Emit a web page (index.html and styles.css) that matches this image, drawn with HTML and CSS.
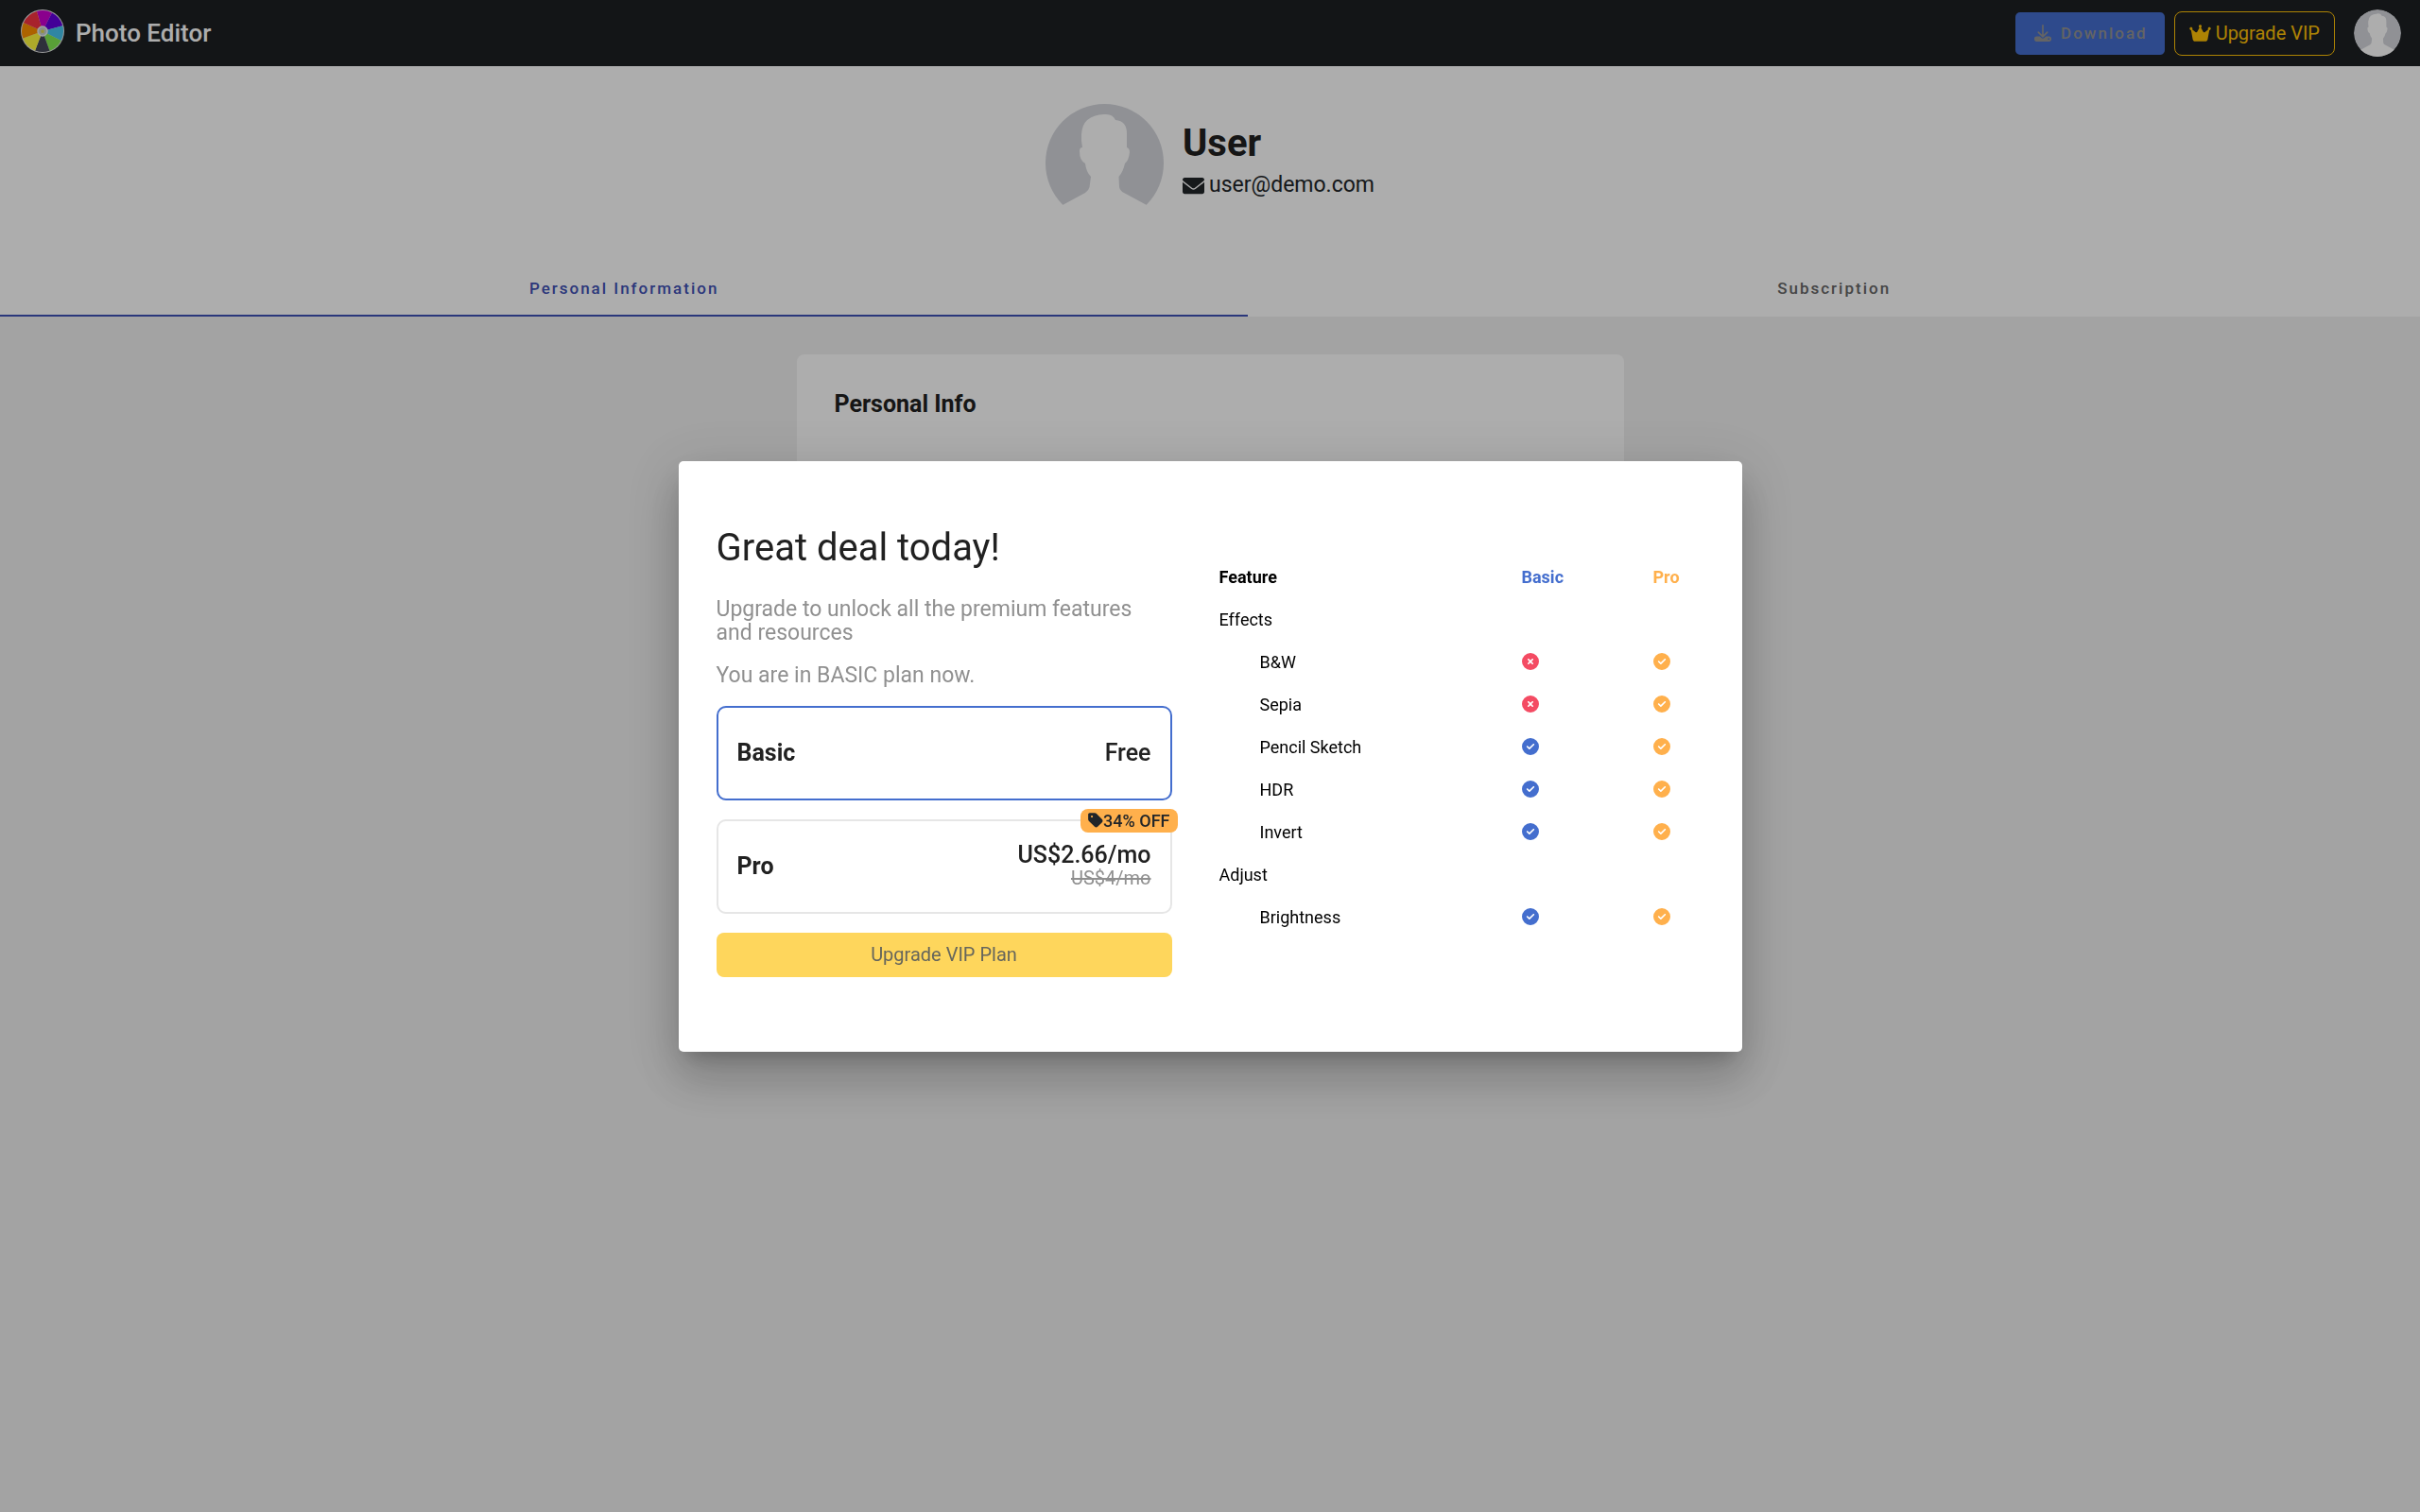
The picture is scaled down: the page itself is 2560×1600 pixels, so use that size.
FILE: index.html
```html
<!DOCTYPE html>
<html lang="en">
<head>
<meta charset="utf-8">
<meta name="viewport" content="width=device-width, initial-scale=1">
<title>Photo Editor</title>
<link rel="stylesheet" href="styles.css">
</head>
<body>
<svg class="sprite" aria-hidden="true">
  <symbol id="avatar" viewBox="0 0 125 125">
    <circle cx="62.500" cy="62.500" r="62.500" fill="#d4d6dc"/>
    <path fill="#fff" d="M0 125V117L18 107L42 94Q46 91 46.500 88L48 77Q43 72 42 63Q36 60 36 50Q36 46 39 46L38 39V32Q39 12 62 11Q71 10 74 17Q86 18 86 31V46Q89 47 89 51Q88 60 84 63Q82 72 77.500 77L78 88Q79 92 83 94L107 107L125 117V125Z"/>
  </symbol>
  <symbol id="check" viewBox="0 0 512 512"><path fill="currentColor" d="M256 512A256 256 0 1 0 256 0a256 256 0 1 0 0 512zM369 209L241 337c-9.400 9.400-24.600 9.400-33.900 0l-64-64c-9.400-9.400-9.400-24.600 0-33.900s24.600-9.400 33.900 0l47 47L335 175c9.400-9.400 24.600-9.400 33.900 0s9.400 24.600 0 33.900z"/></symbol>
  <symbol id="cross" viewBox="0 0 512 512"><path fill="currentColor" d="M256 512A256 256 0 1 0 256 0a256 256 0 1 0 0 512zM175 175c9.400-9.400 24.600-9.400 33.900 0l47 47 47-47c9.400-9.400 24.600-9.400 33.900 0s9.400 24.600 0 33.900l-47 47 47 47c9.400 9.400 9.400 24.600 0 33.900s-24.600 9.400-33.900 0l-47-47-47 47c-9.400 9.400-24.600 9.400-33.900 0s-9.400-24.600 0-33.900l47-47-47-47c-9.400-9.400-9.400-24.600 0-33.900z"/></symbol>
</svg>

<header class="topbar">
  <a class="brand" href="#">
    <svg class="brand-logo" viewBox="0 0 46 46" aria-hidden="true">
      <circle cx="23" cy="23" r="23" fill="#e8e8ea"/>
      <path fill="#cc00d0" d="M23 23L16.900 1.900A22 22 0 0 1 33 3.400Z"/>
      <path fill="#6400e1" d="M23 23L33 3.400A22 22 0 0 1 44.300 17.300Z"/>
      <path fill="#48c6f0" d="M23 23L44.300 17.300A22 22 0 0 1 42.600 33Z"/>
      <path fill="#83eb52" d="M23 23L42.600 33A22 22 0 0 1 30.500 43.700Z"/>
      <path fill="#454857" d="M23 23L30.500 43.700A22 22 0 0 1 15.100 43.500Z"/>
      <path fill="#fff93e" d="M23 23L15.100 43.500A22 22 0 0 1 2.300 30.500Z"/>
      <path fill="#ff9300" d="M23 23L2.300 30.500A22 22 0 0 1 2.900 14Z"/>
      <path fill="#f83441" d="M23 23L2.900 14A22 22 0 0 1 16.900 1.900Z"/>
      <circle cx="23" cy="23" r="5" fill="#c9d3d3" stroke="#eef2f2" stroke-width="1.500"/>
      <path fill="#e0d84a" d="M23 20.500l.8 1.700 1.900.2-1.400 1.300.4 1.800-1.700-.9-1.700.9.400-1.800-1.400-1.300 1.900-.2z"/>
    </svg>
    <span>Photo Editor</span>
  </a>
  <div class="actions">
    <button class="btn-download" type="button" disabled>
      <svg width="18" height="18" viewBox="0 0 512 512" aria-hidden="true"><path fill="none" stroke="currentColor" stroke-width="48" stroke-linecap="round" stroke-linejoin="round" d="M256 24V360M122 232L256 366L390 232"/><path fill="currentColor" d="M64 352c-35.300 0-64 28.700-64 64v32c0 35.300 28.700 64 64 64H448c35.300 0 64-28.700 64-64V416c0-35.300-28.700-64-64-64H346.500l-45.300 45.300c-25 25-65.500 25-90.500 0L165.500 352H64zm368 56a24 24 0 1 1 0 48 24 24 0 1 1 0-48z"/></svg>
      <span>Download</span>
    </button>
    <button class="btn-vip" type="button">
      <svg width="23" height="20" viewBox="0 0 576 512" aria-hidden="true"><path fill="currentColor" d="M309 106c11.400-7 19-19.700 19-34c0-22.100-17.900-40-40-40s-40 17.900-40 40c0 14.400 7.600 27 19 34L209.700 220.600c-9.100 18.200-32.700 23.400-48.600 10.700L72 160c5-6.700 8-15 8-24c0-22.100-17.900-40-40-40S0 113.900 0 136s17.900 40 40 40c.2 0 .5 0 .7 0L86.400 427.400c5.500 30.400 32 52.600 63 52.600H426.600c30.900 0 57.400-22.100 63-52.600L535.300 176c.2 0 .5 0 .7 0c22.100 0 40-17.900 40-40s-17.900-40-40-40s-40 17.900-40 40c0 9 3 17.300 8 24l-89.100 71.300c-15.900 12.700-39.500 7.500-48.600-10.700L309 106z"/></svg>
      <span>Upgrade VIP</span>
    </button>
    <button class="avatar-button" type="button" aria-label="Account"><svg class="avatar-small" aria-hidden="true"><use href="#avatar"/></svg></button>
  </div>
</header>

<main>
  <section class="profile">
    <svg class="avatar-large" aria-hidden="true"><use href="#avatar"/></svg>
    <div class="profile-text">
      <h1>User</h1>
      <p class="email">
        <svg width="23" height="23" viewBox="0 0 512 512" aria-hidden="true"><path fill="currentColor" d="M256 352c-16.530 0-33.060-5.422-47.160-16.410L0 173.200V400C0 426.500 21.490 448 48 448h416c26.510 0 48-21.490 48-48V173.200l-208.800 162.500C289.100 346.600 272.500 352 256 352zM16.290 145.300l212.200 165.100c16.190 12.600 38.870 12.600 55.060 0l212.200-165.100C505.100 137.300 512 125 512 112C512 85.490 490.500 64 464 64h-416C21.490 64 0 85.490 0 112C0 125 6.010 137.300 16.290 145.300z"/></svg>
        <span>user@demo.com</span>
      </p>
    </div>
  </section>
  <nav class="tabs" role="tablist">
    <button class="tab tab-active" type="button" role="tab" aria-selected="true">Personal Information</button>
    <button class="tab" type="button" role="tab" aria-selected="false">Subscription</button>
  </nav>
  <section class="info-card">
    <h2>Personal Info</h2>
  </section>
</main>

<div class="backdrop">
  <div class="dialog" role="dialog" aria-modal="true" aria-labelledby="deal-title">
    <section class="deal">
      <h2 id="deal-title">Great deal today!</h2>
      <p>Upgrade to unlock all the premium features and resources</p>
      <p>You are in BASIC plan now.</p>
      <div class="plans">
        <button class="plan plan-selected" type="button">
          <strong>Basic</strong>
          <span class="price">Free</span>
        </button>
        <button class="plan" type="button">
          <strong>Pro</strong>
          <span class="price">US$2.66/mo <s>US$4/mo</s></span>
          <span class="badge"><svg width="16" height="18" viewBox="0 0 448 512" aria-hidden="true"><path fill="currentColor" d="M0 80V229.500c0 17 6.700 33.300 18.700 45.300l176 176c25 25 65.500 25 90.500 0L418.700 317.300c25-25 25-65.500 0-90.500l-176-176c-12-12-28.300-18.700-45.300-18.700H48C21.500 32 0 53.500 0 80zm112 32a32 32 0 1 1 0 64 32 32 0 1 1 0-64z"/></svg>34% OFF</span>
        </button>
        <button class="btn-upgrade" type="button" disabled>Upgrade VIP Plan</button>
      </div>
    </section>
    <table class="features">
      <thead>
        <tr><th scope="col">Feature</th><th scope="col" class="basic">Basic</th><th scope="col" class="pro">Pro</th></tr>
      </thead>
      <tbody>
        <tr><td>Effects</td><td></td><td></td></tr>
        <tr><td class="sub">B&amp;W</td><td class="no"><svg role="img" aria-label="No"><use href="#cross"/></svg></td><td class="pro"><svg role="img" aria-label="Yes"><use href="#check"/></svg></td></tr>
        <tr><td class="sub">Sepia</td><td class="no"><svg role="img" aria-label="No"><use href="#cross"/></svg></td><td class="pro"><svg role="img" aria-label="Yes"><use href="#check"/></svg></td></tr>
        <tr><td class="sub">Pencil Sketch</td><td class="basic"><svg role="img" aria-label="Yes"><use href="#check"/></svg></td><td class="pro"><svg role="img" aria-label="Yes"><use href="#check"/></svg></td></tr>
        <tr><td class="sub">HDR</td><td class="basic"><svg role="img" aria-label="Yes"><use href="#check"/></svg></td><td class="pro"><svg role="img" aria-label="Yes"><use href="#check"/></svg></td></tr>
        <tr><td class="sub">Invert</td><td class="basic"><svg role="img" aria-label="Yes"><use href="#check"/></svg></td><td class="pro"><svg role="img" aria-label="Yes"><use href="#check"/></svg></td></tr>
        <tr><td>Adjust</td><td></td><td></td></tr>
        <tr><td class="sub">Brightness</td><td class="basic"><svg role="img" aria-label="Yes"><use href="#check"/></svg></td><td class="pro"><svg role="img" aria-label="Yes"><use href="#check"/></svg></td></tr>
      </tbody>
    </table>
  </div>
</div>
</body>
</html>
```
FILE: styles.css
```css
* {
  box-sizing: border-box;
}

body {
  margin: 0;
  min-height: 100vh;
  background: #f1f1f1;
  color: #212121;
  font-family: Roboto, "Liberation Sans", sans-serif;
  font-size: 20px;
}

h1,
h2,
p {
  margin: 0;
}

button {
  font: inherit;
  color: inherit;
  background: none;
  border: 0;
  padding: 0;
}

.sprite {
  display: none;
}

/* Top bar */
.topbar {
  display: flex;
  align-items: center;
  justify-content: space-between;
  height: 70px;
  padding: 0 20px 0 22px;
  background: #1d2023;
}

.brand {
  display: flex;
  align-items: center;
  gap: 12px;
  color: #fff;
  font-size: 26px;
  font-weight: 500;
  text-decoration: none;
}

.brand-logo {
  width: 46px;
  height: 46px;
  margin-bottom: 4px;
}

.actions {
  display: flex;
  align-items: center;
}

.btn-download {
  display: flex;
  align-items: center;
  gap: 10px;
  height: 45px;
  padding: 0 18px 0 20px;
  margin-right: 10px;
  border-radius: 5px;
  background: #446ece;
  color: #949494;
  font-size: 17px;
  font-weight: 500;
  letter-spacing: 2px;
}

.btn-vip {
  display: flex;
  align-items: center;
  gap: 5px;
  height: 47px;
  padding: 0 15px;
  margin-right: 20px;
  border: 1px solid #ffc107;
  border-radius: 8px;
  color: #ffc107;
}

.avatar-button,
.avatar-small {
  display: block;
  width: 50px;
  height: 50px;
  border-radius: 50%;
}

/* Profile */
.profile {
  display: flex;
  justify-content: center;
  gap: 20px;
  padding: 40px 40px 39px;
  background: #fff;
}

.avatar-large {
  width: 125px;
  height: 125px;
}

.profile-text {
  padding-top: 18px;
}

.profile-text h1 {
  font-size: 40px;
  line-height: 48px;
}

.email {
  display: flex;
  align-items: center;
  gap: 5px;
  padding-top: 6px;
  color: #212529;
  font-size: 23px;
  line-height: 28px;
}

.tabs {
  display: flex;
  background: #fff;
}

.tab {
  flex: 1 0 auto;
  height: 61px;
  padding: 2px 30px 0;
  border-bottom: 2px solid transparent;
  color: #666;
  font-size: 17px;
  font-weight: 500;
  letter-spacing: 2px;
}

.tab-active {
  border-color: #3f51b5;
  color: #3f51b5;
}

.info-card {
  max-width: 875px;
  min-height: 400px;
  margin: 40px auto;
  padding: 38px 40px;
  border-radius: 8px;
  background: #fff;
}

.info-card h2 {
  font-size: 25px;
  line-height: 30px;
}

/* Upgrade dialog */
.backdrop {
  position: fixed;
  inset: 0;
  display: grid;
  place-items: center;
  background: rgba(0, 0, 0, 0.32);
}

.dialog {
  display: grid;
  grid-template-columns: 482fr 513fr;
  gap: 50px;
  align-items: start;
  width: 100%;
  max-width: 1125px;
  padding: 72px 40px 79px;
  border-radius: 5px;
  background: #fff;
  box-shadow: 0 14px 19px -9px rgba(0, 0, 0, 0.2),
    0 30px 48px 4px rgba(0, 0, 0, 0.14),
    0 11px 58px 10px rgba(0, 0, 0, 0.12);
}

.deal h2 {
  margin-bottom: 32px;
  font-size: 40px;
  font-weight: 400;
  line-height: 40px;
}

.deal p {
  margin-bottom: 20px;
  color: #909090;
  font-size: 23px;
  line-height: 25px;
}

.plans {
  display: grid;
  gap: 20px;
}

.plan {
  position: relative;
  display: flex;
  align-items: center;
  justify-content: space-between;
  height: 100px;
  padding: 0 20px;
  border: 2px solid #e6e6e6;
  border-radius: 10px;
  font-size: 25px;
}

.plan-selected {
  border-color: #446ece;
}

.price {
  font-weight: 500;
  text-align: right;
  line-height: 25px;
}

.price s {
  display: block;
  color: #909090;
  font-size: 20px;
  font-weight: 400;
}

.badge {
  position: absolute;
  top: -13px;
  right: -8px;
  display: flex;
  align-items: center;
  height: 25px;
  padding: 0 8px;
  border-radius: 8px;
  background: #ffb04c;
  color: #212529;
  font-size: 18px;
  font-weight: 500;
}

.btn-upgrade {
  height: 47px;
  border-radius: 8px;
  background: #fed65c;
  color: #66665c;
}

.features {
  width: 100%;
  margin-top: 28px;
  border-collapse: collapse;
  table-layout: fixed;
  color: #000;
  font-size: 18px;
  text-align: left;
}

.features tr {
  height: 45px;
}

.features th,
.features td {
  padding: 0;
}

.features th:nth-child(2) {
  width: 139px;
}

.features th:nth-child(3) {
  width: 54px;
}

.features .sub {
  padding-left: 43px;
}

.features svg {
  display: block;
  width: 18px;
  height: 18px;
}

.basic {
  color: #446ece;
}

.pro {
  color: #ffb04c;
}

.no {
  color: #f44b63;
}
```
